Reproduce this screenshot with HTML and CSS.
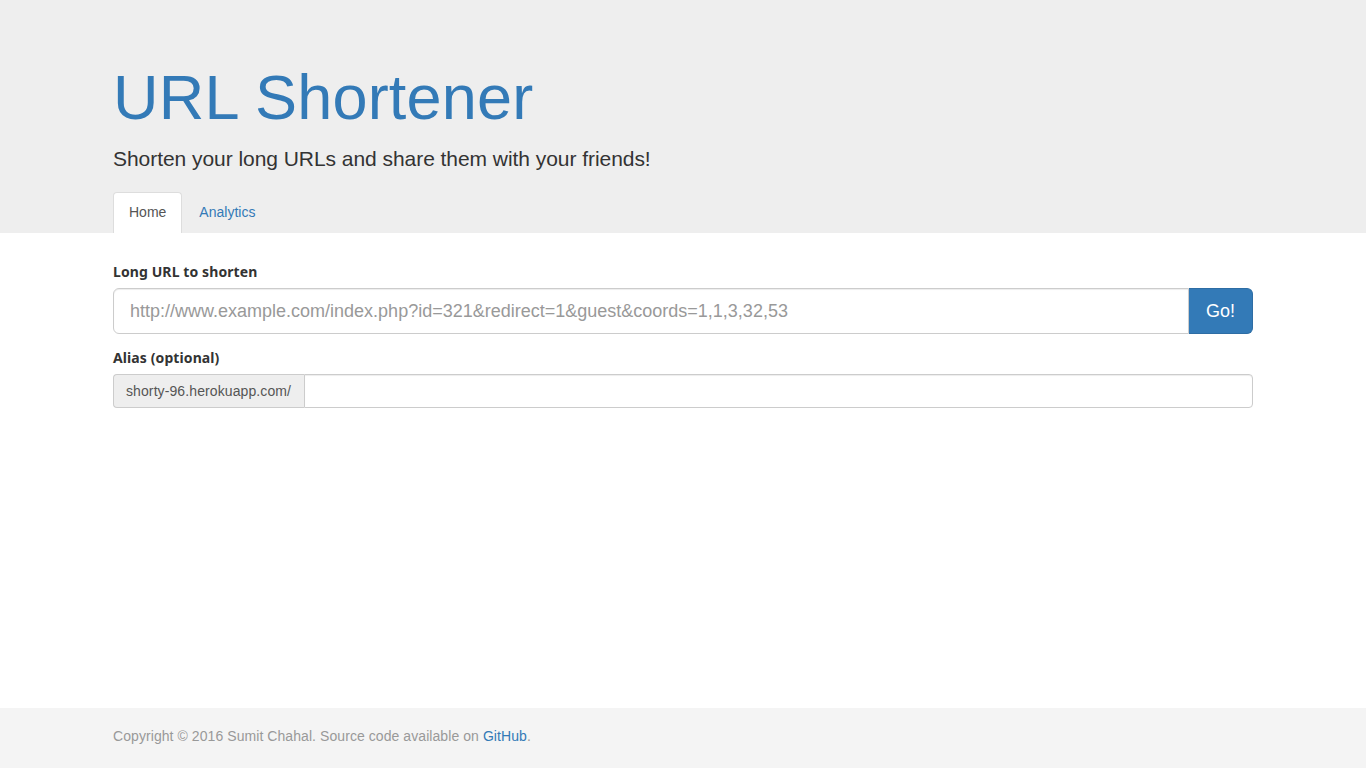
FILE: index.html
```html
<!DOCTYPE html>
<html lang="en">
<head>
<meta charset="utf-8">
<title>URL Shortener</title>
<link rel="stylesheet" href="styles.css">
</head>
<body>
<div class="page">
  <header class="jumbotron">
    <div class="container">
      <h1 class="title">URL Shortener</h1>
      <p class="lead">Shorten your long URLs and share them with your friends!</p>
      <ul class="tabs">
        <li class="tab active"><a href="#">Home</a></li>
        <li class="tab"><a href="#">Analytics</a></li>
      </ul>
    </div>
  </header>
  <main class="content">
    <div class="container">
      <form class="form">
        <div class="form-group">
          <label class="label">Long URL to shorten</label>
          <div class="input-group">
            <input class="input input-lg" type="text" placeholder="http://www.example.com/index.php?id=321&amp;redirect=1&amp;guest&amp;coords=1,1,3,32,53">
            <button class="btn" type="button">Go!</button>
          </div>
        </div>
        <div class="form-group">
          <label class="label">Alias (optional)</label>
          <div class="input-group">
            <span class="addon">shorty-96.herokuapp.com/</span>
            <input class="input input-sm-group" type="text">
          </div>
        </div>
      </form>
    </div>
  </main>
  <footer class="footer">
    <div class="container">
      <p class="footer-text">Copyright © 2016 Sumit Chahal. Source code available on <a href="#">GitHub</a>.</p>
    </div>
  </footer>
</div>
</body>
</html>
```

FILE: styles.css
```css
* { box-sizing: border-box; }
html, body { margin: 0; padding: 0; }
body {
  font-family: "Liberation Sans", Arial, sans-serif;
  font-size: 14px;
  line-height: 20px;
  color: #333;
  background: #fff;
}
a { color: #337ab7; text-decoration: none; }
.page { min-height: 768px; display: flex; flex-direction: column; }
.container { width: 1170px; margin: 0 auto; padding: 0 15px; }

.jumbotron { background: #eee; padding-top: 43px; }
.title {
  margin: 20px 0 12px;
  font-size: 63px;
  line-height: 69px;
  font-weight: 500;
  color: #337ab7;
  letter-spacing: 0.2px;
}
.lead {
  margin: 0 0 18px;
  font-size: 21px;
  line-height: 30px;
  font-weight: 400;
  color: #333;
  letter-spacing: -0.05px;
}
.tabs {
  list-style: none;
  margin: 0;
  padding: 0;
  display: flex;
  gap: 1px;
}
.tab a {
  display: block;
  padding: 9px 15px 11px;
  line-height: 20px;
  font-size: 14px;
  border: 1px solid transparent;
  border-bottom: 0;
  border-radius: 4px 4px 0 0;
  color: #337ab7;
  height: 41px;
}
.tab.active a {
  background: #fff;
  border-color: #ddd;
  color: #555;
}

.content { flex: 1; padding-top: 30px; }
.form-group { margin-bottom: 15px; }
.label {
  display: block;
  width: fit-content;
  margin-bottom: 7px;
  font-family: "Noto Sans", sans-serif;
  font-weight: bold;
  font-size: 14px;
  line-height: 18px;
  color: #333;
  letter-spacing: 0.1px;
}
.input-group { display: flex; }
.input {
  flex: 1;
  min-width: 0;
  font-family: "Liberation Sans", Arial, sans-serif;
  border: 1px solid #ccc;
  background: #fff;
  color: #555;
  box-shadow: inset 0 1px 1px rgba(0,0,0,.075);
  outline: none;
}
.input-lg {
  height: 46px;
  padding: 10px 16px;
  font-size: 18px;
  line-height: 24px;
  border-radius: 6px 0 0 6px;
}
.input-lg::placeholder { color: #999; }
.btn {
  height: 46px;
  width: 64px;
  padding: 10px 16px;
  font-family: "Liberation Sans", Arial, sans-serif;
  font-size: 18px;
  line-height: 24px;
  color: #fff;
  background: #337ab7;
  border: 1px solid #2e6da4;
  border-left: 0;
  border-radius: 0 6px 6px 0;
  cursor: pointer;
}
.addon {
  display: flex;
  align-items: center;
  height: 34px;
  width: 191px;
  padding: 6px 12px;
  font-size: 14px;
  color: #555;
  background: #eee;
  border: 1px solid #ccc;
  border-right: 0;
  border-radius: 4px 0 0 4px;
  letter-spacing: 0.1px;
}
.input-sm-group {
  height: 34px;
  padding: 6px 12px;
  font-size: 14px;
  border-radius: 0 4px 4px 0;
}

.footer { background: #f4f4f4; height: 60px; }
.footer-text {
  margin: 0;
  padding-top: 18px;
  font-size: 14px;
  line-height: 20px;
  color: #999;
  letter-spacing: 0.07px;
}
```
